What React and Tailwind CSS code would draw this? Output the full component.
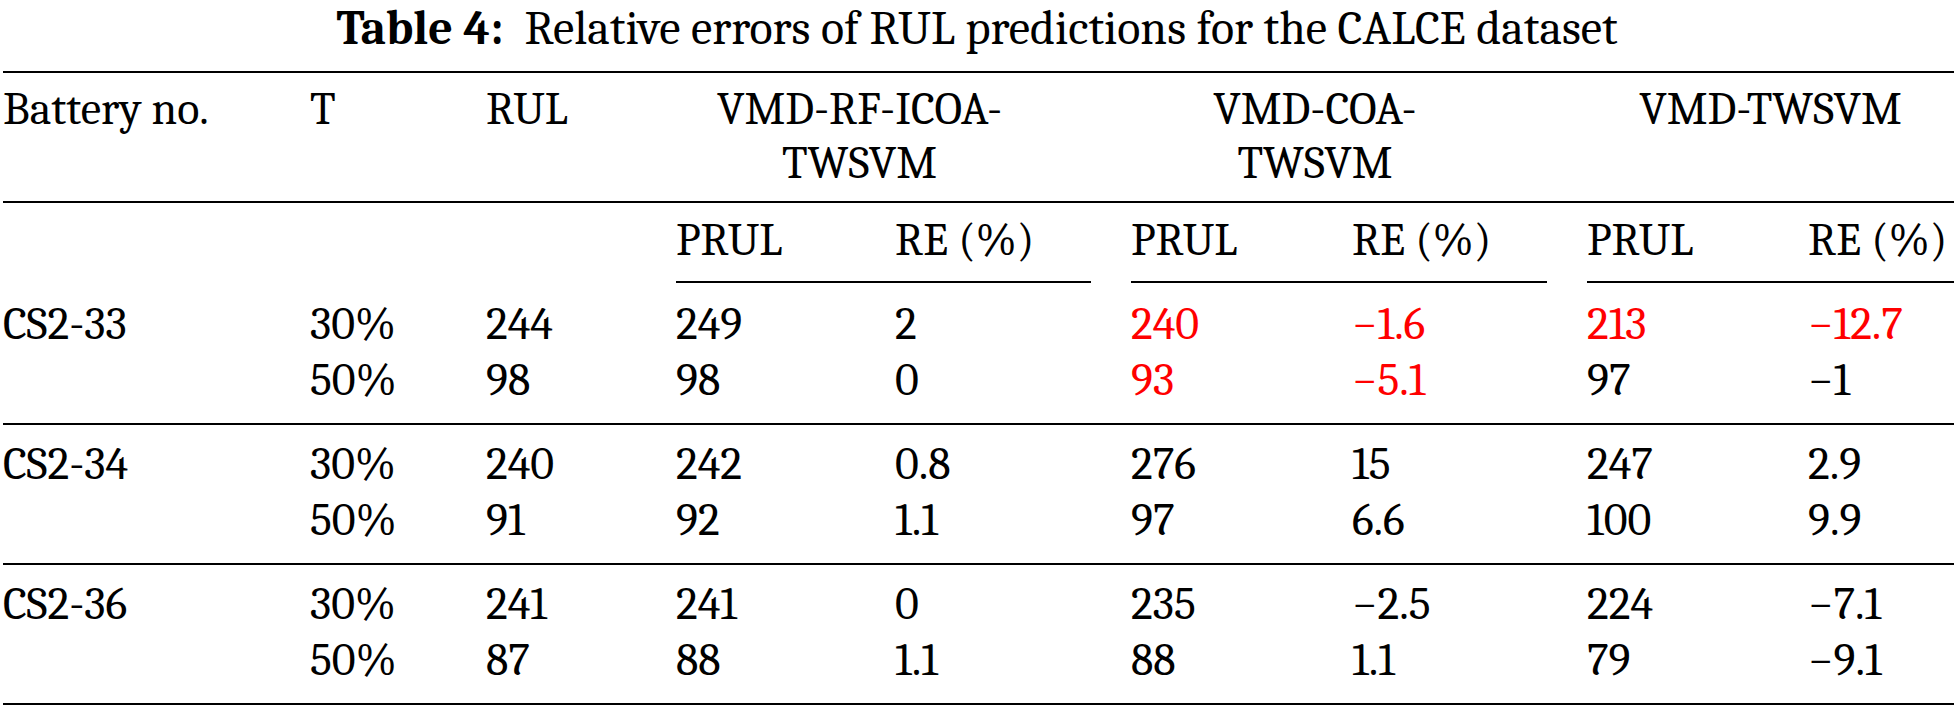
import React from "react";

const cols =
  "grid grid-cols-[307px_176px_190px_219px_236px_221px_235px_221px_234px]";

// each row: T, RUL, then PRUL/RE pairs for the three models; "*" marks red
const groups = [
  {
    no: "CS2-33",
    rows: [
      ["30%", "244", "249", "2", "240*", "−1.6*", "213*", "−12.7*"],
      ["50%", "98", "98", "0", "93*", "−5.1*", "97", "−1"],
    ],
  },
  {
    no: "CS2-34",
    rows: [
      ["30%", "240", "242", "0.8", "276", "15", "247", "2.9"],
      ["50%", "91", "92", "1.1", "97", "6.6", "100", "9.9"],
    ],
  },
  {
    no: "CS2-36",
    rows: [
      ["30%", "241", "241", "0", "235", "−2.5", "224", "−7.1"],
      ["50%", "87", "88", "1.1", "88", "1.1", "79", "−9.1"],
    ],
  },
];

function Rule() {
  return <div className="h-[2px] bg-black" />;
}

function Cell({ value }) {
  const red = value.endsWith("*");
  return (
    <div className={red ? "text-[#ff0000]" : ""}>
      {red ? value.slice(0, -1) : value}
    </div>
  );
}

export default function App() {
  return (
    <div className="w-[1954px] h-[708px] overflow-hidden bg-white text-black font-serif text-[46px] leading-[56px]">
      {/* Caption */}
      <div className="h-[71px]">
        <p className="text-center text-[48px] leading-[58px] whitespace-pre">
          <span className="font-bold">Table 4:</span>
          {"  "}Relative errors of RUL predictions for the CALCE dataset
        </p>
      </div>

      <div className="ml-[3px] w-[2039px]">
        <Rule />

        {/* Header */}
        <div className={`${cols} leading-[54px] pt-[10px] pb-[10px]`}>
          <div>Battery no.</div>
          <div>T</div>
          <div>RUL</div>
          <div className="col-span-2 text-center pr-[88px]">
            VMD-RF-ICOA-
            <br />
            TWSVM
          </div>
          <div className="col-span-2 text-center pr-[88px]">
            VMD-COA-
            <br />
            TWSVM
          </div>
          <div className="col-span-2 text-center pr-[88px]">VMD-TWSVM</div>
        </div>
        <Rule />

        {/* Sub header */}
        <div className={`${cols} pt-[10px]`}>
          <div className="col-start-4">PRUL</div>
          <div>RE (%)</div>
          <div>PRUL</div>
          <div>RE (%)</div>
          <div>PRUL</div>
          <div>RE (%)</div>
        </div>
        <div className={`${cols} pt-[12px]`}>
          <div className="col-start-4 col-span-2 mr-10 h-[2px] bg-black" />
          <div className="col-span-2 mr-10 h-[2px] bg-black" />
          <div className="col-span-2 mr-10 h-[2px] bg-black" />
        </div>

        {/* Body */}
        {groups.map((g, gi) => (
          <div key={g.no}>
            <div className={`${cols} ${gi === 0 ? "pt-[14px]" : "pt-[12px]"} pb-[14px]`}>
              {g.rows.map((r, ri) => (
                <React.Fragment key={ri}>
                  <div>{ri === 0 ? g.no : ""}</div>
                  {r.map((v, vi) => (
                    <Cell key={vi} value={v} />
                  ))}
                </React.Fragment>
              ))}
            </div>
            <Rule />
          </div>
        ))}
      </div>
    </div>
  );
}
